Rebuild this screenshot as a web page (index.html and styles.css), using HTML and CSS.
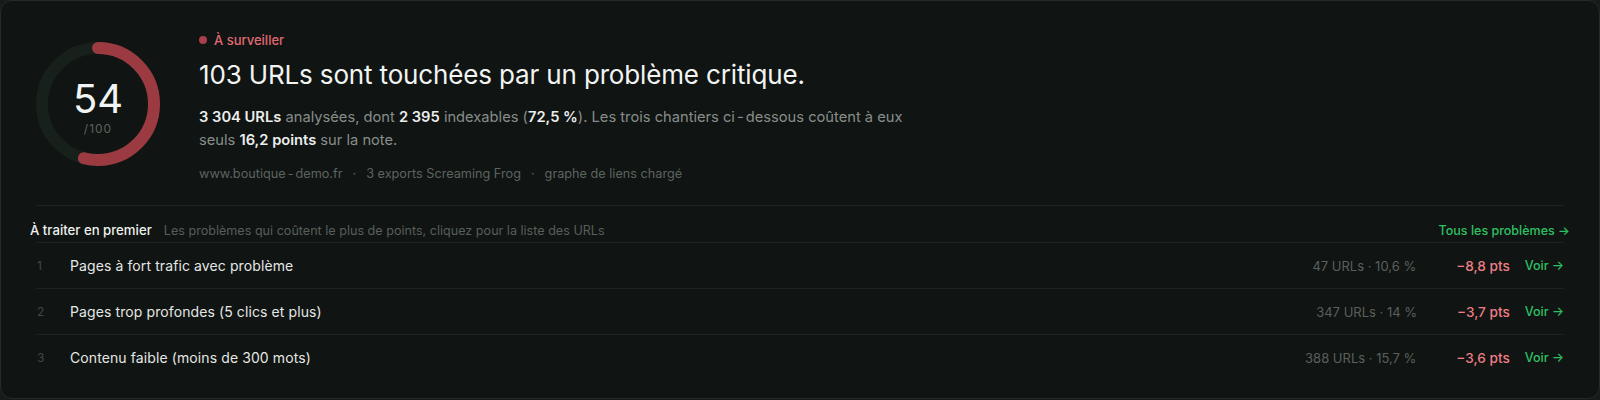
FILE: index.html
```html
<!DOCTYPE html>
<html lang="fr">
<head>
<meta charset="utf-8">
<link rel="stylesheet" href="styles.css">
</head>
<body>
<div class="card">
  <div class="summary">
    <div class="gauge">
      <svg class="gauge-svg" width="124" height="124" viewBox="0 0 124 124">
        <circle cx="62" cy="62" r="56" fill="none" stroke="#17201b" stroke-width="12"/>
        <circle cx="62" cy="62" r="56" fill="none" stroke="#9c3a41" stroke-width="12" stroke-linecap="round" stroke-dasharray="190 400" transform="rotate(-90 62 62)"/>
      </svg>
      <div class="gauge-label">
        <div class="gauge-score">54</div>
        <div class="gauge-max">/100</div>
      </div>
    </div>
    <div class="info">
      <div class="status"><span class="status-dot"></span>À surveiller</div>
      <h1 class="headline">103 URLs sont touchées par un problème critique.</h1>
      <p class="desc"><b>3 304 URLs</b> analysées, dont <b>2 395</b> indexables (<b>72,5 %</b>). Les trois chantiers ci<span class="hy">-</span>dessous coûtent à eux seuls <b>16,2 points</b> sur la note.</p>
      <div class="meta"><span>www.boutique<span class="hy">-</span>demo.fr</span><span class="sep">·</span><span>3 exports Screaming Frog</span><span class="sep">·</span><span>graphe de liens chargé</span></div>
    </div>
  </div>
  <div class="issues">
    <div class="issues-head">
      <span class="issues-title">À traiter en premier</span>
      <span class="issues-sub">Les problèmes qui coûtent le plus de points, cliquez pour la liste des URLs</span>
      <a class="all-link">Tous les problèmes →</a>
    </div>
    <div class="row">
      <span class="num">1</span>
      <span class="title">Pages à fort trafic avec problème</span>
      <span class="stats">47 URLs · 10,6 %</span>
      <span class="pts">−8,8 pts</span>
      <a class="voir">Voir →</a>
    </div>
    <div class="row">
      <span class="num">2</span>
      <span class="title">Pages trop profondes (5 clics et plus)</span>
      <span class="stats">347 URLs · 14 %</span>
      <span class="pts">−3,7 pts</span>
      <a class="voir">Voir →</a>
    </div>
    <div class="row">
      <span class="num">3</span>
      <span class="title">Contenu faible (moins de 300 mots)</span>
      <span class="stats">388 URLs · 15,7 %</span>
      <span class="pts">−3,6 pts</span>
      <a class="voir">Voir →</a>
    </div>
  </div>
</div>
</body>
</html>
```
FILE: styles.css
```css
* { box-sizing: border-box; }
html, body { margin: 0; padding: 0; }
body {
  background: #171b19;
  font-family: Inter, "Noto Sans", sans-serif;
  color: #e6e9e7;
}
.card {
  width: 1600px;
  height: 399px;
  background: #101412;
  border: 1px solid #242b27;
  border-radius: 12px;
  padding: 31px 35px 17px;
}
.summary {
  display: flex;
  gap: 39px;
  align-items: flex-start;
}
.gauge {
  position: relative;
  width: 124px;
  height: 124px;
  margin-top: 10px;
  flex: none;
}
.gauge-svg { display: block; }
.gauge-label {
  position: absolute;
  inset: 0;
  display: flex;
  flex-direction: column;
  align-items: center;
  justify-content: center;
  padding-top: 4px;
}
.gauge-score {
  font-size: 40px;
  line-height: 44px;
  color: #f2f4f3;
  font-weight: 400;
}
.gauge-max {
  font-size: 12px;
  line-height: 15px;
  color: #5b625e;
  letter-spacing: 1px;
}
.info { width: 720px; }
.status {
  display: flex;
  align-items: center;
  gap: 7px;
  font-size: 13px;
  line-height: 16px;
  font-weight: 500;
  color: #e06a72;
}
.status-dot {
  width: 8px;
  height: 8px;
  border-radius: 50%;
  background: #a7404a;
}
.headline {
  margin: 12px 0 0;
  font-size: 26px;
  line-height: 30px;
  font-weight: 400;
  color: #f2f4f3;
  letter-spacing: -0.15px;
}
.desc {
  margin: 16px 0 0;
  font-size: 14.7px;
  line-height: 22.5px;
  color: #878e8a;
}
.desc b {
  color: #eceeed;
  font-weight: 600;
}
.hy { margin: 0 2px; }
.meta {
  margin-top: 15px;
  font-size: 12.7px;
  line-height: 16px;
  color: #5c6460;
  display: flex;
}
.meta .sep { margin: 0 10px; }
.issues {
  margin-top: 23px;
  border-top: 1px solid #1e2521;
}
.issues-head {
  display: flex;
  align-items: baseline;
  margin: 0 -6px;
  padding: 15px 0 2px;
  line-height: 18px;
}
.issues-title {
  font-size: 13.2px;
  font-weight: 500;
  color: #eef0ef;
}
.issues-sub {
  margin-left: 12px;
  font-size: 12.6px;
  color: #575f5b;
}
.all-link {
  margin-left: auto;
  font-size: 12.5px;
  font-weight: 500;
  color: #2fc064;
}
.row {
  display: flex;
  align-items: center;
  height: 46px;
  border-top: 1px solid #1c2320;
}
.num {
  width: 34px;
  padding-left: 1px;
  font-size: 12px;
  color: #434a46;
}
.title {
  flex: 1;
  font-size: 14px;
  letter-spacing: 0.1px;
  color: #e4e7e5;
}
.stats {
  font-size: 13px;
  color: #59605c;
  margin-right: 40px;
}
.pts {
  font-size: 13.6px;
  font-weight: 500;
  color: #ee7e86;
  margin-right: 15px;
}
.voir {
  font-size: 12.6px;
  font-weight: 500;
  color: #2fc064;
}
```
